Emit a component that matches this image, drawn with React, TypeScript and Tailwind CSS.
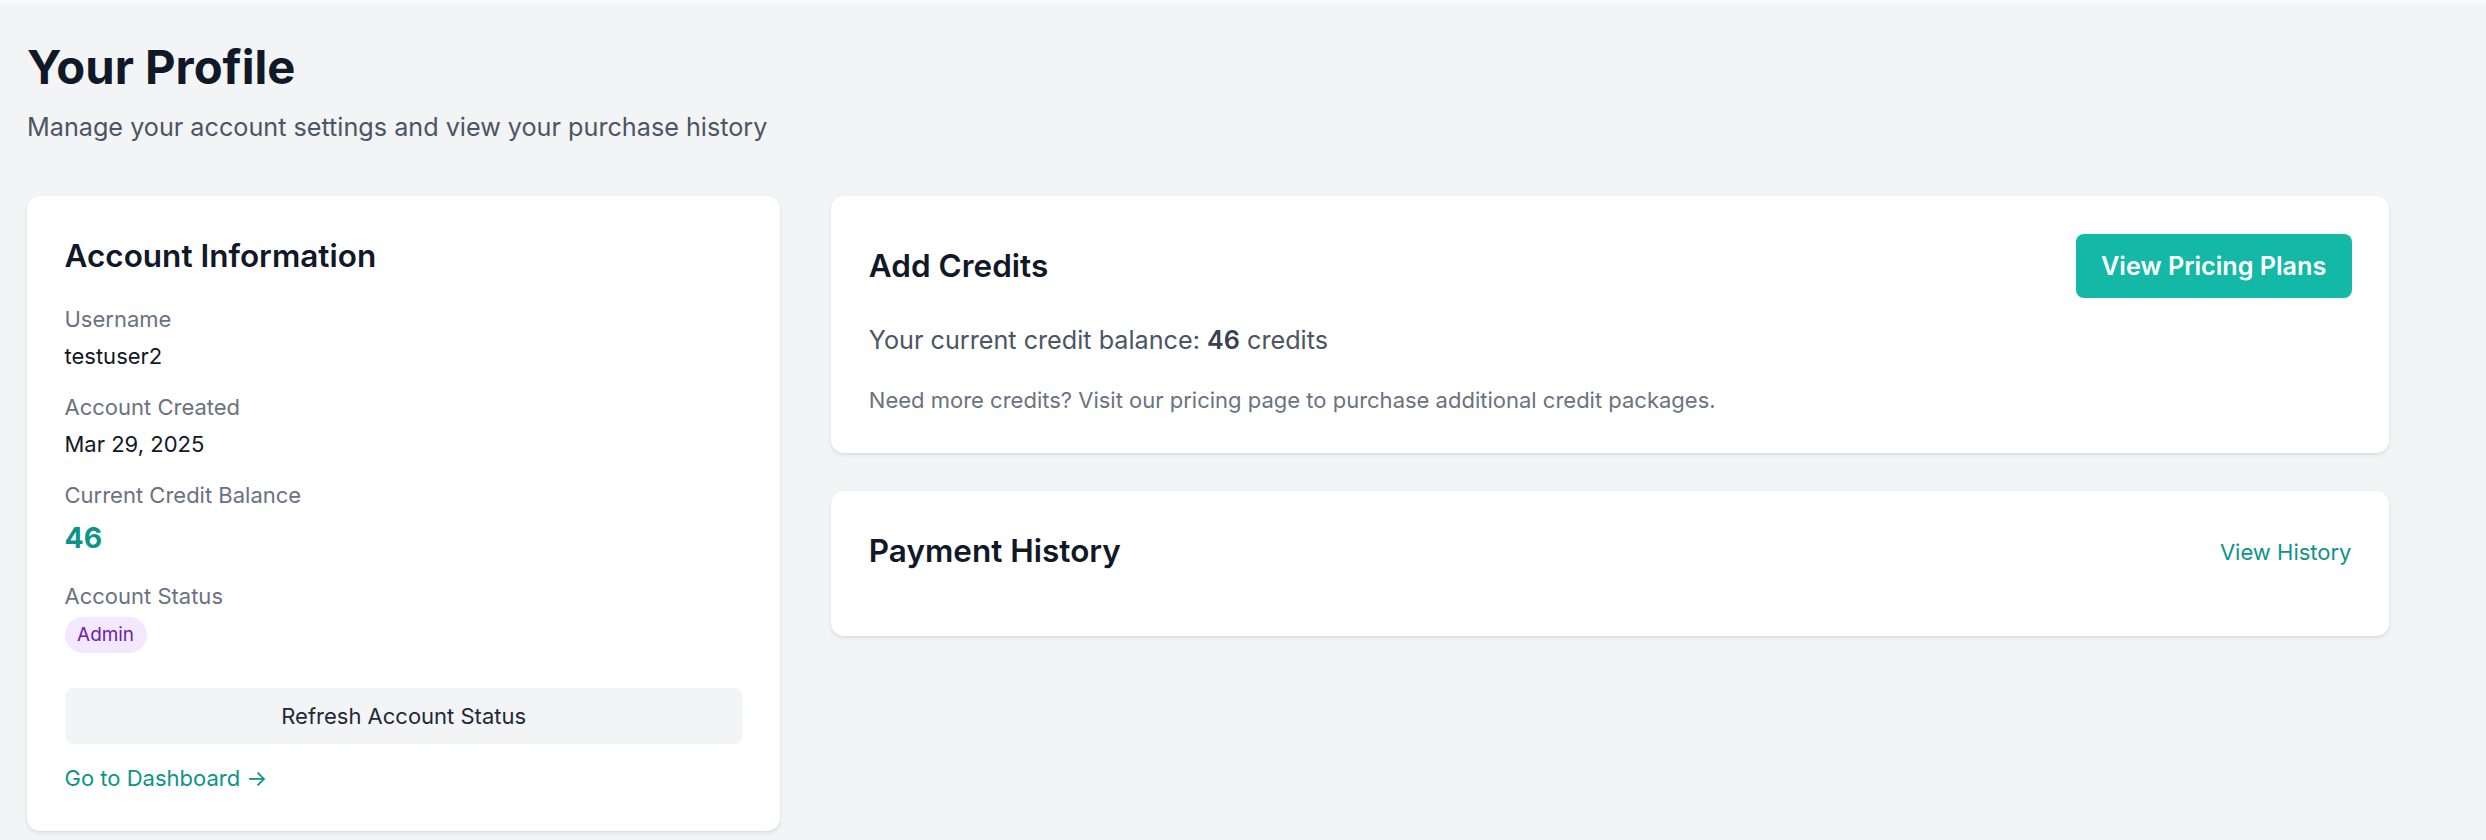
import React from "react";

const Label = (props: { children: React.ReactNode }) => (
    <div className="text-[22px] leading-[32px] text-[#6b7280]">{props.children}</div>
);

const AccountCard = () => {
    return (
        <div className="bg-white rounded-[12.8px] shadow-[0_2px_5px_rgba(0,0,0,0.08),0_1px_2px_rgba(0,0,0,0.05)] pt-[38.4px] pb-[37px] px-[37.5px]">
            <h2 className="text-[31.5px] leading-[44.8px] font-semibold text-[#111827] mb-[24px]">Account Information</h2>
            <div className="flex flex-col gap-[19.2px]">
                <div>
                    <Label>Username</Label>
                    <div className="mt-[4.8px] text-[22px] leading-[32px] text-[#111827]">testuser2</div>
                </div>
                <div>
                    <Label>Account Created</Label>
                    <div className="mt-[4.8px] text-[22px] leading-[32px] text-[#111827]">Mar 29, 2025</div>
                </div>
                <div>
                    <Label>Current Credit Balance</Label>
                    <div className="mt-[4.8px] text-[28.3px] leading-[44.8px] font-bold text-[#0d9488]">46</div>
                </div>
                <div>
                    <Label>Account Status</Label>
                    <div className="mt-[5.4px] flex">
                        <span className="rounded-full bg-[#f3e8ff] text-[#6b21a8] text-[18.9px] leading-[25.6px] px-[12.6px] py-[5px]">
                            Admin
                        </span>
                    </div>
                </div>
            </div>
            <button className="mt-[35px] w-full rounded-[8px] bg-[#f3f4f6] py-[12px] text-[22px] leading-[32px] text-[#1f2937]">
                Refresh Account Status
            </button>
            <div className="mt-[18.3px]">
                <a href="#" className="text-[22px] leading-[32px] text-[#0d9488]">Go to Dashboard →</a>
            </div>
        </div>
    );
};

const CreditsCard = () => {
    return (
        <div className="bg-white rounded-[12.8px] shadow-[0_2px_5px_rgba(0,0,0,0.08),0_1px_2px_rgba(0,0,0,0.05)] pt-[38.4px] pb-[36.8px] px-[37.5px]">
            <div className="flex items-center justify-between">
                <h2 className="text-[31.5px] leading-[44.8px] font-semibold text-[#111827]">Add Credits</h2>
                <button className="rounded-[8px] bg-[#14b8a6] px-[25.2px] py-[12.8px] text-[25.2px] leading-[38.4px] font-semibold text-white">
                    View Pricing Plans
                </button>
            </div>
            <p className="mt-[23px] text-[25.2px] leading-[38.4px] text-[#4b5563]">
                Your current credit balance: <span className="font-semibold text-[#374151]">46</span> credits
            </p>
            <p className="mt-[24.3px] text-[22px] leading-[32px] text-[#6b7280]">
                Need more credits? Visit our pricing page to purchase additional credit packages.
            </p>
        </div>
    );
};

const PaymentCard = () => {
    return (
        <div className="bg-white rounded-[12.8px] shadow-[0_2px_5px_rgba(0,0,0,0.08),0_1px_2px_rgba(0,0,0,0.05)] pt-[38.4px] pb-[62px] px-[37.5px]">
            <div className="flex items-center justify-between">
                <h2 className="text-[31.5px] leading-[44.8px] font-semibold text-[#111827]">Payment History</h2>
                <a href="#" className="text-[22px] leading-[32px] text-[#0d9488]">View History</a>
            </div>
        </div>
    );
};

export default function App() {
    return (
        <div className="min-h-screen bg-[#f3f4f6] border-t-[3px] border-[#f8f9fa] font-['Inter',sans-serif]">
            <div className="w-[2362px] ml-[27px] pt-[35.4px]">
                <h1 className="text-[47.2px] leading-[57.6px] font-bold text-[#111827]">Your Profile</h1>
                <p className="mt-[12px] text-[25.2px] leading-[38.4px] text-[#4b5563]">
                    Manage your account settings and view your purchase history
                </p>
                <div className="mt-[49.6px] grid grid-cols-3 gap-[51px] items-start">
                    <AccountCard />
                    <div className="col-span-2 flex flex-col gap-[38px]">
                        <CreditsCard />
                        <PaymentCard />
                    </div>
                </div>
            </div>
        </div>
    );
}
